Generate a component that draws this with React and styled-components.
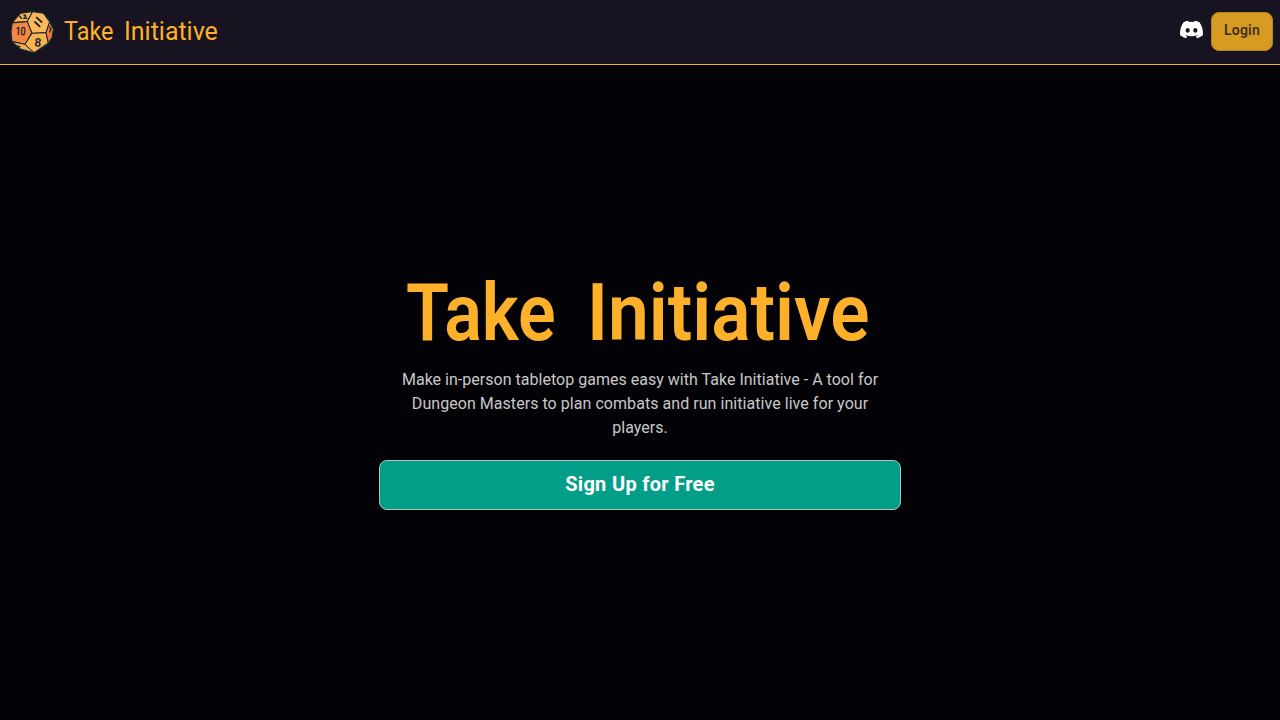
import React from "react";
import styled, { createGlobalStyle } from "styled-components";
import { FaDiscord } from "react-icons/fa";

const GlobalStyle = createGlobalStyle`
  * { box-sizing: border-box; }
  body {
    margin: 0;
    background: #030207;
    font-family: Roboto, "Noto Sans", sans-serif;
  }
`;

const Page = styled.div`
  height: 100vh;
  display: flex;
  flex-direction: column;
  overflow: hidden;
`;

const Header = styled.header`
  flex: none;
  height: 65px;
  padding: 0 7px 1px 10px;
  display: flex;
  align-items: center;
  background: #181320;
  border-bottom: 1px solid #fdb12a;
`;

const Brand = styled.div`
  display: flex;
  align-items: center;
  gap: 10px;
  margin-right: auto;
`;

const BrandName = styled.span`
  display: flex;
  gap: 10px;
  height: 32px;
  line-height: 31px;
  font-size: 26px;
  color: #fdb12a;
`;

const Word = styled.span`
  display: block;
  width: ${(p) => p.$width}px;
  white-space: nowrap;
  transform: scaleX(${(p) => p.$stretch});
  transform-origin: left center;
`;

const DiscordLink = styled.a`
  display: flex;
  margin: 0 7px 5px 0;
  color: #fff;
`;

const Button = styled.button`
  font-family: inherit;
  border-radius: 8px;
  cursor: pointer;
  padding: 0;
`;

const LoginButton = styled(Button)`
  width: 62px;
  height: 39px;
  padding-bottom: 3px;
  border: 1px solid #b8841f;
  background: #d89b22;
  color: #40301b;
  font-size: 14px;
  font-weight: 600;
  letter-spacing: 0.2px;
`;

const Main = styled.main`
  flex: 1;
  display: flex;
  flex-direction: column;
  align-items: center;
  padding-top: 200px;
`;

const Hero = styled.section`
  width: 522px;
  display: flex;
  flex-direction: column;
`;

const Title = styled.h1`
  margin: 0 0 7px;
  padding-left: 27px;
  display: flex;
  gap: 33px;
  height: 96px;
  line-height: 97px;
  font-size: 80px;
  font-weight: 600;
  color: #fdb12a;
`;

const Lead = styled.p`
  margin: 0 0 20px;
  font-size: 16px;
  line-height: 24px;
  text-align: center;
  color: #c8c8c8;
`;

const Line = styled.span`
  display: block;
  white-space: nowrap;
  letter-spacing: ${(p) => p.$tracking}px;
`;

const SignUpButton = styled(Button)`
  height: 50px;
  padding-bottom: 2px;
  border: 1px solid #a4c9c0;
  background: #029e88;
  color: #fff;
  font-size: 20px;
  font-weight: 700;
  letter-spacing: 0.3px;
`;

const DieSvg = styled.svg`
  display: block;
  width: 44px;
  height: 44px;
`;

function Die() {
  return (
    <DieSvg viewBox="30 30 132 132">
      <path d="M62 39L98 32L130 38L150 58L162 85L158 115L143 137L101 160L61 149L36 127L31 96L37 66Z" fill="#102e38" />
      <g stroke="#15242b" strokeWidth="3" strokeLinejoin="round">
        <path d="M38 67L62 40L97 35L82 65Z" fill="#f6b553" />
        <path d="M98 35L130 40L149 66L138 98L96 100L82 65Z" fill="#fbb95b" />
        <path d="M37 69L82 65L95 98L75 133L36 124L33 96Z" fill="#f58643" />
        <path d="M96 100L138 98L145 129L102 158L75 133Z" fill="#f7b34f" />
        <path d="M149 66L160 88L156 112L145 129L138 98Z" fill="#f17b3d" />
        <path d="M36 125L75 133L101 158L62 147Z" fill="#f2ad4c" />
      </g>
      <g fill="#15242b" fontFamily="Roboto, sans-serif" fontWeight="600">
        <text x="46" y="106" fontSize="36" textLength="31" lengthAdjust="spacingAndGlyphs" transform="rotate(3 60 95)">10</text>
        <text x="103" y="140" fontSize="36" transform="rotate(6 114 129)">8</text>
      </g>
      <g fill="none" stroke="#15242b" strokeLinecap="round">
        <path d="M105 66L119 79M110 53L125 66" strokeWidth="5.5" />
        <path d="M59 48L64 55M72 45C80 46 78 50 72 54L81 55M149 81L153 88L149 96M50 138L59 140L56 144" strokeWidth="4" />
      </g>
    </DieSvg>
  );
}

export default function App() {
  return (
    <>
      <GlobalStyle />
      <Page>
        <Header>
          <Brand>
            <Die />
            <BrandName>
              <Word $width={50} $stretch={0.9}>Take</Word>
              <Word $width={94} $stretch={0.96}>Initiative</Word>
            </BrandName>
          </Brand>
          <DiscordLink aria-label="Discord">
            <FaDiscord size={25} />
          </DiscordLink>
          <LoginButton>Login</LoginButton>
        </Header>
        <Main>
          <Hero>
            <Title>
              <Word $width={148} $stretch={0.875}>Take</Word>
              <Word $width={278} $stretch={0.913}>Initiative</Word>
            </Title>
            <Lead>
              <Line $tracking={0.02}>Make in-person tabletop games easy with Take Initiative - A tool for</Line>
              <Line $tracking={0.05}>Dungeon Masters to plan combats and run initiative live for your</Line>
              <Line $tracking={0}>players.</Line>
            </Lead>
            <SignUpButton>Sign Up for Free</SignUpButton>
          </Hero>
        </Main>
      </Page>
    </>
  );
}
